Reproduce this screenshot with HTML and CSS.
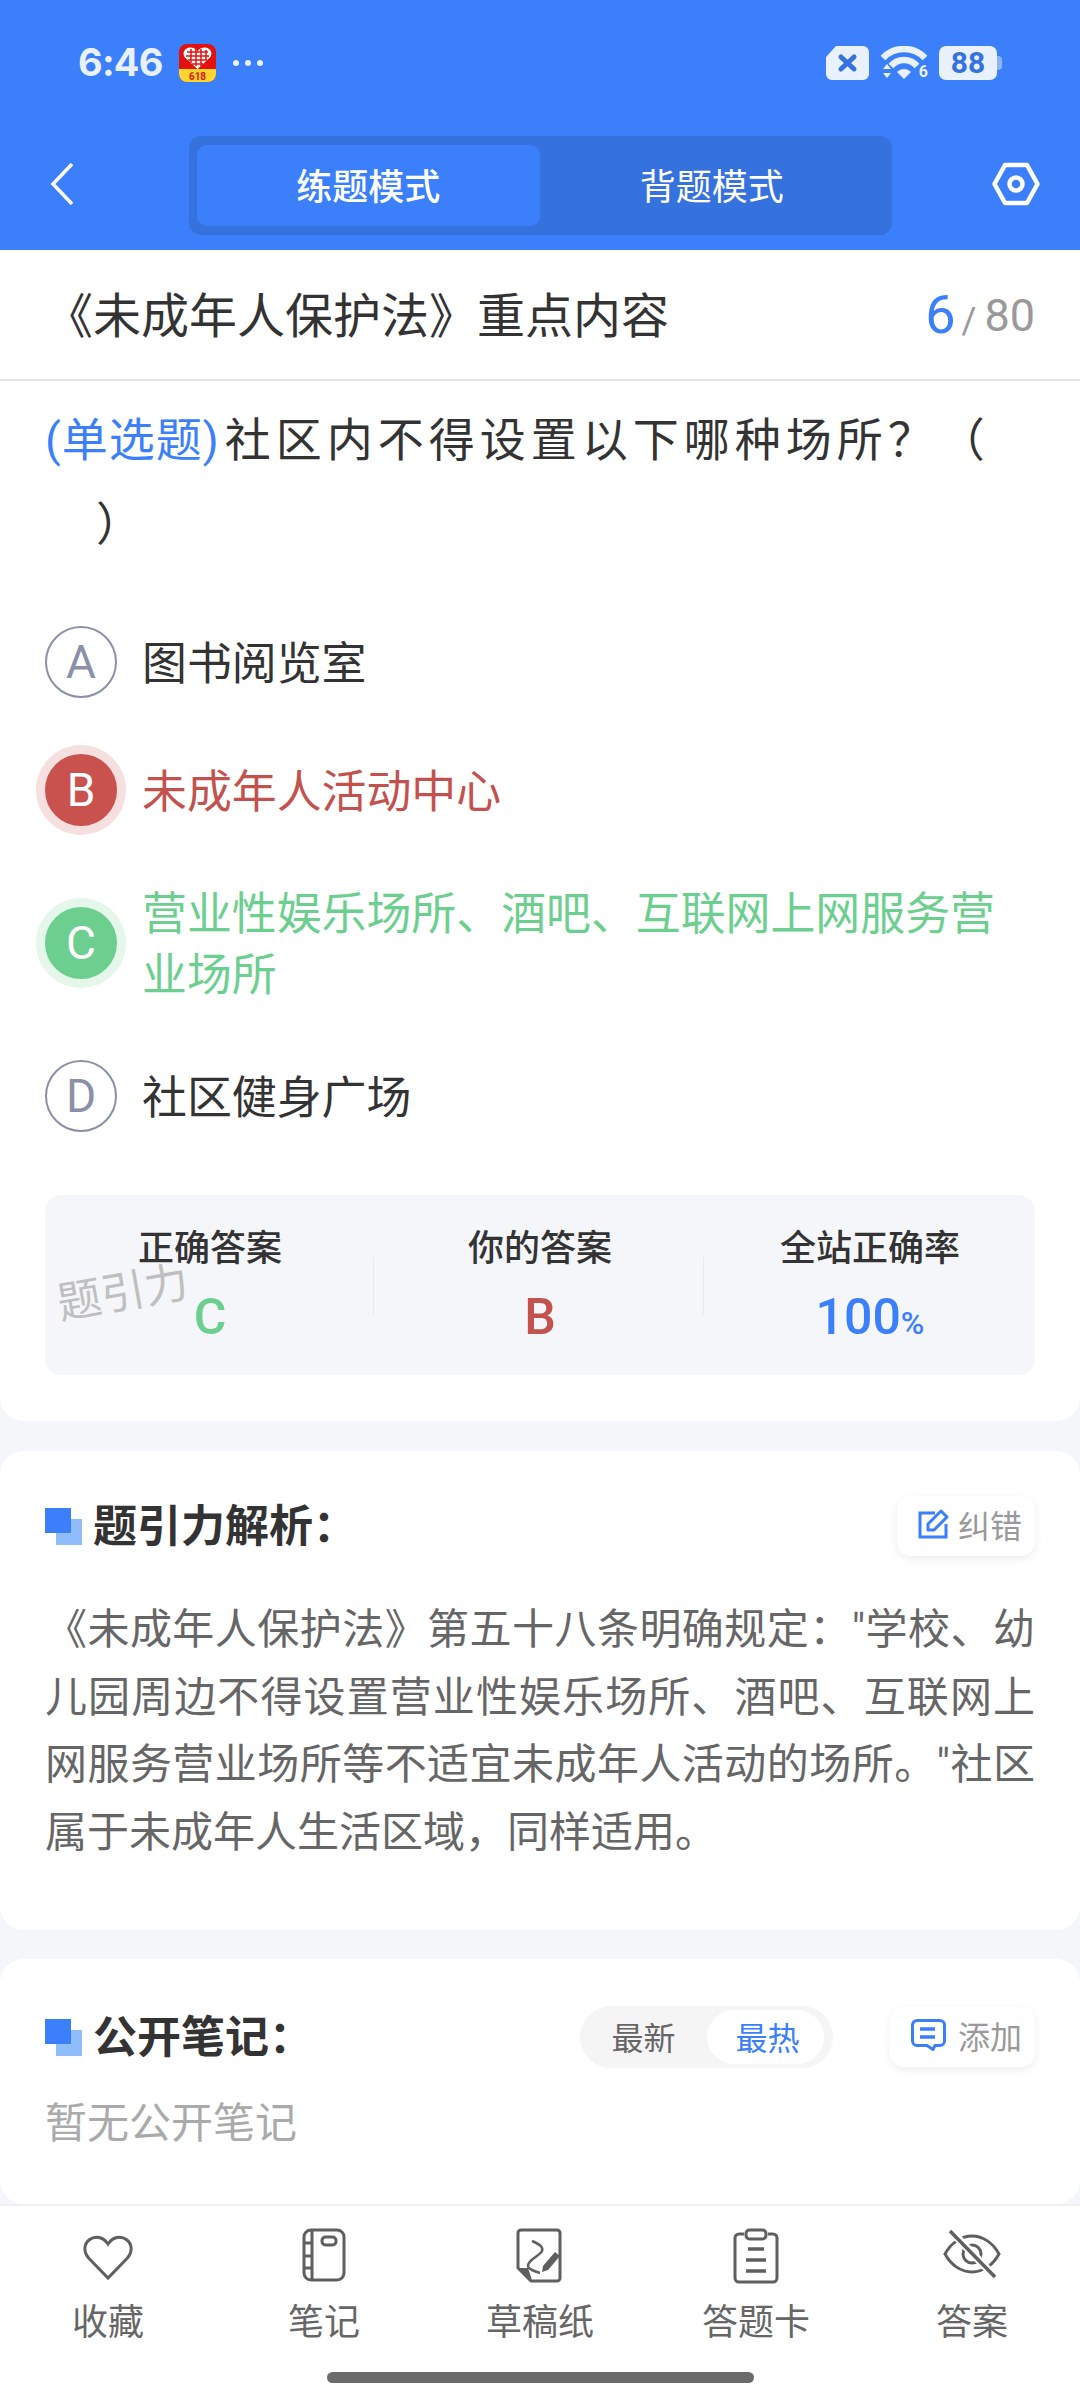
FILE: index.html
```html
<!DOCTYPE html>
<html lang="zh-CN">
<head>
<meta charset="utf-8">
<title>练题模式</title>
<link rel="stylesheet" href="styles.css">
</head>
<body>
<div class="app">
  <header class="header">
    <div class="status">
      <div class="status-left">
        <span class="time">6:46</span>
        <svg class="app-618" viewBox="0 0 37 38">
          <defs><clipPath id="c618"><rect width="37" height="38" rx="8"/></clipPath></defs>
          <g clip-path="url(#c618)">
            <rect width="37" height="38" fill="#e3120f"/>
            <rect y="25" width="37" height="13" fill="#ffd52e"/>
            <path d="M18.5 25 6 13.5C2.5 9 6 3.5 11 3.5c3.500 0 6 1.500 7.500 4 1.500-2.500 4-4 7.500-4 5 0 8.500 5.500 5 10z" fill="#fff"/>
            <path d="M8 8h21M7 12h23M9 16h19M13 20h11M12 5v14M17 5v17M22 5v17M27 6v10" stroke="#e3120f" stroke-width="1.500" fill="none"/>
            <text x="18.5" y="36" class="t618">618</text>
          </g>
        </svg>
        <span class="dots"><i></i><i></i><i></i></span>
      </div>
      <div class="status-right">
        <svg class="sim" viewBox="0 0 43 34">
          <path d="M10 0h27a6 6 0 0 1 6 6v22a6 6 0 0 1-6 6H6a6 6 0 0 1-6-6V11z" fill="#e9f0fe"/>
          <path d="M15 11l13 12M28 11L15 23" stroke="#3672dd" stroke-width="5" stroke-linecap="round"/>
        </svg>
        <div class="wifi">
          <svg class="wifi-ico" viewBox="0 0 48 34">
            <path d="M3 12C14 0 34 0 45 12" stroke="#e9f0fe" stroke-width="6.500" fill="none"/>
            <path d="M11 20C18 12 30 12 37 20" stroke="#e9f0fe" stroke-width="6.500" fill="none"/>
            <path d="M17 26c4-4 10-4 14 0l-7 7z" fill="#e9f0fe"/>
            <path d="M3 23l4-5 4 5zM3 27l4 5 4-5z" fill="#e9f0fe"/>
          </svg>
          <span class="wifi-six">6</span>
        </div>
        <div class="battery"><span class="level">88</span><i class="nub"></i></div>
      </div>
    </div>
    <nav class="nav">
      <svg class="back" viewBox="0 0 24 44"><path d="M22 2 3 22l19 20" fill="none" stroke="#fff" stroke-width="3.500"/></svg>
      <div class="tabs">
        <div class="tab tab-on">练题模式</div>
        <div class="tab">背题模式</div>
      </div>
      <svg class="gear" viewBox="0 0 48 44">
        <path d="M13 3h22l10.500 19L35 41H13L2.500 22z" fill="none" stroke="#fff" stroke-width="4.500" stroke-linejoin="round"/>
        <circle cx="24" cy="22" r="6.500" fill="none" stroke="#fff" stroke-width="4.500"/>
      </svg>
    </nav>
  </header>

  <div class="title-row">
    <h1 class="title">《未成年人保护法》重点内容</h1>
    <div class="count"><b class="count-now">6</b><span class="count-sep">/</span><span class="count-all">80</span></div>
  </div>

  <section class="card card-q">
    <p class="question"><span class="q-type">(单选题)</span>社区内不得设置以下哪种场所？（<br>&#12288;）</p>
    <ul class="options">
      <li class="option"><span class="letter">A</span><span class="opt-text">图书阅览室</span></li>
      <li class="option wrong"><span class="letter">B</span><span class="opt-text">未成年人活动中心</span></li>
      <li class="option right"><span class="letter">C</span><span class="opt-text">营业性娱乐场所、酒吧、互联网上网服务营业场所</span></li>
      <li class="option"><span class="letter">D</span><span class="opt-text">社区健身广场</span></li>
    </ul>
    <div class="stats">
      <div class="stat"><span class="stat-label">正确答案</span><span class="stat-value v-right">C</span></div>
      <div class="stat"><span class="stat-label">你的答案</span><span class="stat-value v-wrong">B</span></div>
      <div class="stat"><span class="stat-label">全站正确率</span><span class="stat-value v-rate">100<small>%</small></span></div>
      <span class="mark">题引力</span>
    </div>
  </section>

  <section class="card card-a">
    <div class="sec-head">
      <h2 class="sec-title"><i class="sq"></i>题引力解析：</h2>
      <button class="chip chip-fix">
        <svg class="chip-ico" viewBox="0 0 32 30"><path d="M17 4H2v24h26V15" fill="none" stroke="#3b7ffb" stroke-width="3"/><path d="M10 21v-6L23 2l6 6-13 13z" fill="none" stroke="#3b7ffb" stroke-width="3" stroke-linejoin="round"/></svg>
        纠错
      </button>
    </div>
    <p class="analysis">《未成年人保护法》第五十八条明确规定："学校、幼儿园周边不得设置营业性娱乐场所、酒吧、互联网上网服务营业场所等不适宜未成年人活动的场所。"社区属于未成年人生活区域，同样适用。</p>
  </section>

  <section class="card card-n">
    <div class="sec-head sec-head-n">
      <h2 class="sec-title"><i class="sq"></i>公开笔记：</h2>
      <div class="sort"><span class="sort-item">最新</span><span class="sort-item sort-on">最热</span></div>
      <button class="chip chip-add">
        <svg class="chip-ico" viewBox="0 0 35 32"><path d="M6 1.500h23a4.500 4.500 0 0 1 4.500 4.500v16a4.500 4.500 0 0 1-4.500 4.500h-5l-2 4-6-4H6A4.500 4.500 0 0 1 1.500 22V6A4.500 4.500 0 0 1 6 1.500z" fill="none" stroke="#3b7ffb" stroke-width="3"/><path d="M9 10h15M9 18h15" stroke="#3b7ffb" stroke-width="3.500"/></svg>
        添加
      </button>
    </div>
    <p class="empty">暂无公开笔记</p>
  </section>

  <footer class="bottom">
    <div class="tools">
      <div class="tool">
        <svg class="tool-ico" viewBox="0 0 64 56"><path d="M32 50 13 30.500C7 24 8 16 13 12c6-4.500 14-3.500 19 4 5-7.500 13-8.500 19-4 5 4 6 12 0 18.500z" fill="none" stroke="#5f5f5f" stroke-width="3"/></svg>
        <span>收藏</span>
      </div>
      <div class="tool">
        <svg class="tool-ico" viewBox="0 0 64 56"><rect x="12" y="2" width="40" height="50" rx="7" fill="none" stroke="#5f5f5f" stroke-width="3"/><path d="M20 2v50M12 15h8M12 28h8M12 40h8" fill="none" stroke="#5f5f5f" stroke-width="3"/><rect x="30" y="9" width="14" height="8" rx="3.500" fill="none" stroke="#5f5f5f" stroke-width="3"/></svg>
        <span>笔记</span>
      </div>
      <div class="tool">
        <svg class="tool-ico" viewBox="0 0 64 56"><path d="M13 2h36a3 3 0 0 1 3 3v45a3 3 0 0 1-3 3H23L10 40V5a3 3 0 0 1 3-3z" fill="none" stroke="#5f5f5f" stroke-width="3"/><path d="M10 40h10l4 12z" fill="#5f5f5f"/><path d="M24 13c5 2 12 5 10 10-3 6-14 8-14 15 0 3 6 5 12 7" fill="none" stroke="#5f5f5f" stroke-width="2.500"/><path d="M35 38l12-14 5 4-12 14-6 2z" fill="#5f5f5f"/></svg>
        <span>草稿纸</span>
      </div>
      <div class="tool">
        <svg class="tool-ico" viewBox="0 0 64 56"><path d="M20 6h-5a4 4 0 0 0-4 4v40a4 4 0 0 0 4 4h34a4 4 0 0 0 4-4V10a4 4 0 0 0-4-4h-5" fill="none" stroke="#5f5f5f" stroke-width="3"/><rect x="22" y="2" width="20" height="9" rx="3.500" fill="none" stroke="#5f5f5f" stroke-width="3"/><path d="M24 21h16M22 32h20M22 43h20" stroke="#5f5f5f" stroke-width="3.500"/></svg>
        <span>答题卡</span>
      </div>
      <div class="tool">
        <svg class="tool-ico" viewBox="0 0 64 56"><path d="M5 26c6-11 16-18 27-18s21 7 27 18c-6 11-16 18-27 18S11 37 5 26z" fill="none" stroke="#5f5f5f" stroke-width="3"/><circle cx="32" cy="26" r="9" fill="none" stroke="#5f5f5f" stroke-width="3"/><path d="M10 2 56 50" stroke="#fff" stroke-width="8"/><path d="M10 3 55 49" stroke="#5f5f5f" stroke-width="3.500"/></svg>
        <span>答案</span>
      </div>
    </div>
    <div class="home"></div>
  </footer>
</div>
</body>
</html>
```
FILE: styles.css
```css
* { box-sizing: border-box; }
html, body { margin: 0; padding: 0; }
body {
  width: 1080px;
  height: 2400px;
  overflow: hidden;
  background: #f4f6f9;
  font-family: Roboto, "Noto Sans CJK SC", sans-serif;
  color: #333;
}
h1, h2, p, ul { margin: 0; padding: 0; }
ul { list-style: none; }
.app { display: flex; flex-direction: column; height: 2400px; }

/* header */
.header { background: #3b7ffb; height: 250px; }
.status { height: 136px; padding: 46px 83px 0 78px; display: flex; justify-content: space-between; align-items: flex-start; }
.status-left { display: flex; align-items: center; height: 34px; }
.time { font-family: Inter, sans-serif; font-weight: 700; font-size: 38px; color: #e9f0fe; letter-spacing: -0.8px; margin-bottom: 3px; }
.app-618 { width: 37px; height: 38px; margin-left: 16px; }
.t618 { font: 700 10px Roboto, sans-serif; fill: #d8120f; text-anchor: middle; }
.dots { display: flex; gap: 6px; margin-left: 17px; }
.dots i { width: 6px; height: 6px; border-radius: 50%; background: #e9f0fe; }
.status-right { display: flex; align-items: flex-start; }
.sim { width: 43px; height: 34px; }
.wifi { position: relative; width: 48px; height: 34px; margin-left: 11px; }
.wifi-ico { display: block; width: 48px; height: 34px; }
.wifi-six { position: absolute; right: 0; bottom: 0; font: 700 16px/16px Roboto, sans-serif; color: #e9f0fe; }
.battery { position: relative; width: 58px; height: 34px; margin-left: 11px; background: #e9f0fe; border-radius: 7px; text-align: center; }
.level { font: 700 30px/34px Roboto, sans-serif; color: #3672dd; }
.nub { position: absolute; left: 58px; top: 10px; width: 5px; height: 14px; background: #8db4fb; border-radius: 0 4px 4px 0; }

.nav { display: grid; grid-template-columns: 1fr 703px 1fr; align-items: center; height: 99px; }
.back { width: 24px; height: 44px; margin: 0 0 3px 50px; }
.tabs { display: flex; height: 99px; padding: 9px 8px; background: #3672dd; border-radius: 12px; }
.tab { flex: 1; display: flex; align-items: center; justify-content: center; padding-bottom: 3px; color: #fff; font-size: 36px; border-radius: 10px; }
.tab-on { background: #3b7ffb; font-weight: 500; }
.gear { width: 48px; height: 44px; justify-self: end; margin: 0 40px 3px 0; }

/* title */
.title-row { height: 131px; background: #fff; border-bottom: 2px solid #e5e5e5; display: flex; align-items: center; justify-content: space-between; padding: 0 45px; }
.title { font-size: 48px; font-weight: 400; color: #333; margin-bottom: 6px; }
.count { color: #999; font-size: 45px; white-space: nowrap; }
.count-now { font-weight: 400; font-size: 54px; color: #3b7ffb; }
.count-sep { font-size: 36px; margin: 0 8px 0 6px; }
.count-all { vertical-align: 2px; }

/* cards */
.card { background: #fff; }
.card-q { padding: 17px 45px 46px; border-radius: 0 0 24px 24px; }
.question { font-size: 46px; line-height: 84px; letter-spacing: 5px; color: #333; }
.q-type { color: #3b7ffb; letter-spacing: 1px; margin-right: 5px; }
.options { margin-top: 60px; display: flex; flex-direction: column; gap: 56px; }
.option { display: flex; align-items: center; min-height: 72px; }
.letter { flex: none; width: 72px; height: 72px; border-radius: 50%; border: 2px solid #8b90a8; color: #8b90a8; font-size: 46px; display: flex; align-items: center; justify-content: center; }
.opt-text { margin-left: 25px; padding-top: 2px; margin-bottom: -2px; font-size: 44.900px; line-height: 61px; color: #333; }
.wrong .letter { background: #c9524f; border-color: #c9524f; color: #fff; box-shadow: 0 0 0 9px #f6dfdf; }
.wrong .opt-text { color: #c3524f; }
.right .letter { background: #6dcf8f; border-color: #6dcf8f; color: #fff; box-shadow: 0 0 0 9px #e4f7ea; }
.right .opt-text { color: #6dcf8f; }

.stats { position: relative; margin-top: 63px; height: 180px; background: #f4f6f9; border-radius: 16px; display: grid; grid-template-columns: repeat(3, 1fr); }
.stat { position: relative; display: flex; flex-direction: column; align-items: center; padding-top: 33px; }
.stat + .stat::before { content: ""; position: absolute; left: -2px; top: 62px; height: 58px; width: 1px; background: #e8e9ec; }
.stat-label { font-size: 36px; line-height: 42px; font-weight: 500; color: #333; }
.stat-value { margin-top: 17px; font-size: 50px; line-height: 60px; font-weight: 500; }
.stat-value small { font-size: 32px; }
.v-right { color: #6dcf8f; }
.v-wrong { color: #c3524f; }
.v-rate { color: #3b7ffb; }
.mark { position: absolute; left: 12px; top: 73px; font-size: 44px; line-height: 50px; color: #bfbfbf; transform: rotate(-10deg); }

.card-a { margin-top: 30px; height: 479px; padding: 45px 45px 0; border-radius: 24px; }
.sec-head { display: flex; align-items: center; justify-content: space-between; height: 60px; }
.sec-title { display: flex; align-items: center; margin-bottom: 6px; font-size: 44px; font-weight: 700; color: #333; }
.sq { position: relative; flex: none; width: 37px; height: 37px; margin: 6px 11px 0 0; }
.sq::before { content: ""; position: absolute; left: 11px; top: 11px; width: 26px; height: 26px; background: #8fbcfb; }
.sq::after { content: ""; position: absolute; left: 0; top: 0; width: 26px; height: 25px; background: #3b7ffb; }
.chip { display: flex; align-items: center; height: 60px; border: 0; background: #fff; border-radius: 14px; box-shadow: 0 3px 10px rgba(0, 0, 0, .07); font-family: inherit; font-size: 32px; color: #999; padding: 0 13px 4px 21px; }
.chip-ico { flex: none; width: 32px; height: 30px; margin-right: 8px; }
.chip-fix { width: 138px; }
.chip-add { width: 145px; padding-left: 21px; }
.chip-add .chip-ico { width: 35px; height: 32px; margin-right: 12px; }
.analysis { margin-top: 40px; font-size: 42px; line-height: 67.500px; color: #666; text-align: justify; }

.card-n { margin-top: 29px; flex: 1; padding: 47px 45px 0; border-radius: 24px; }
.sec-head-n { height: 62px; }
.sec-head-n .sec-title { margin-right: auto; }
.sort { display: flex; align-items: center; height: 62px; width: 253px; padding: 4px 9px 4px 0; background: #f5f5f5; border-radius: 31px; margin-right: 57px; font-size: 32px; color: #666; }
.sort-item { flex: 1; display: flex; align-items: center; justify-content: center; height: 54px; border-radius: 27px; padding-bottom: 2px; }
.sort-on { flex: none; width: 117px; padding-left: 4px; background: #fff; color: #3b7ffb; }
.empty { margin-top: 26px; font-size: 42px; line-height: 60px; color: #aaa; }

/* bottom */
.bottom { height: 196px; background: #fff; border-top: 2px solid #f1f1f1; }
.tools { display: grid; grid-template-columns: repeat(5, 216px); padding-top: 22px; }
.tool { display: flex; flex-direction: column; align-items: center; font-size: 36px; line-height: 44px; color: #666; }
.tool-ico { width: 64px; height: 56px; margin-bottom: 17px; }
.home { width: 427px; height: 11px; margin: 27px auto 0; background: #6b6b6b; border-radius: 6px; }
```
